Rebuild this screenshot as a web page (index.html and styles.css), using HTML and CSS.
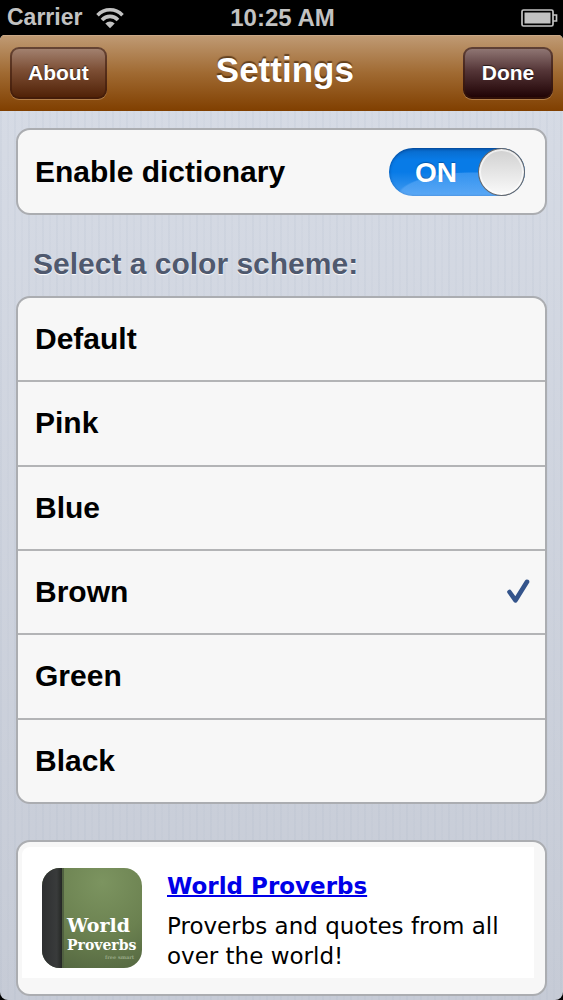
FILE: index.html
```html
<!DOCTYPE html>
<html lang="en">
<head>
<meta charset="utf-8">
<meta name="viewport" content="width=device-width, initial-scale=1">
<title>Settings</title>
<link rel="stylesheet" href="styles.css">
</head>
<body>
<div class="status">
  <div class="carrier">Carrier
    <svg width="28" height="22" viewBox="0 0 28 22" aria-label="Wi-Fi">
      <g fill="none" stroke="#c2c2c2" stroke-width="3.6">
        <path d="M1.5 8.2C8.5 1 19.500 1 26.500 8.200"/>
        <path d="M6 13C10.500 8.200 17.500 8.200 22 13"/>
      </g>
      <path d="M9.300 16.400C12 13.700 16 13.700 18.700 16.400L14 21.300Z" fill="#c2c2c2"/>
    </svg>
  </div>
  <div class="time">10:25 AM</div>
  <svg class="battery" width="37" height="18" viewBox="0 0 37 18" aria-label="Battery">
    <rect x="1" y="1" width="31" height="16" rx="1.500" fill="none" stroke="#c2c2c2" stroke-width="1.700"/>
    <rect x="3.500" y="3.500" width="26" height="11" fill="#c2c2c2"/>
    <path d="M32 6h3.500v6H32" fill="none" stroke="#c2c2c2" stroke-width="1.700"/>
  </svg>
</div>
<div class="screen">
  <header class="nav">
    <button class="nav-btn about" type="button">About</button>
    <h1 class="title">Settings</h1>
    <button class="nav-btn done" type="button">Done</button>
  </header>
  <main class="content">
    <div class="card dictionary">
      <label for="dictionary">Enable dictionary</label>
      <span class="switch">
        <input class="switch-input" type="checkbox" role="switch" id="dictionary" checked>
        <span class="switch-text" aria-hidden="true">ON</span>
      </span>
    </div>
    <h2 class="heading" id="scheme">Select a color scheme:</h2>
    <div class="card schemes" role="radiogroup" aria-labelledby="scheme">
      <label class="row">Default<input class="tick" type="radio" name="scheme"></label>
      <label class="row">Pink<input class="tick" type="radio" name="scheme"></label>
      <label class="row">Blue<input class="tick" type="radio" name="scheme"></label>
      <label class="row">Brown
        <svg class="check" width="24" height="26" viewBox="0 0 24 26" aria-hidden="true"><path d="M3.500 13L9.500 21.300L21 2.800" fill="none" stroke="#34548b" stroke-width="4.600" stroke-linecap="round" stroke-linejoin="round"/></svg>
        <input class="tick" type="radio" name="scheme" checked></label>
      <label class="row">Green<input class="tick" type="radio" name="scheme"></label>
      <label class="row">Black<input class="tick" type="radio" name="scheme"></label>
    </div>
    <div class="card promo">
      <div class="promo-inner">
        <svg class="app-icon" width="102" height="102" viewBox="0 0 102 102" role="img" aria-label="World Proverbs">
          <defs>
            <clipPath id="round"><rect x="1" y="1" width="100" height="100" rx="18"/></clipPath>
            <radialGradient id="cover" cx=".6" cy=".15" r=".95"><stop offset="0" stop-color="#7c9460"/><stop offset=".55" stop-color="#6b8150"/><stop offset="1" stop-color="#536640"/></radialGradient>
            <linearGradient id="spine"><stop offset="0" stop-color="#2d2e30"/><stop offset=".75" stop-color="#393b3b"/><stop offset="1" stop-color="#242724"/></linearGradient>
          </defs>
          <g clip-path="url(#round)">
            <rect width="102" height="102" fill="url(#cover)"/>
            <rect width="21" height="102" fill="url(#spine)"/>
            <rect x="21" width="2" height="102" fill="#506040"/>
            <text class="icon-world" x="26" y="65">World</text>
            <text class="icon-proverbs" x="26" y="83">Proverbs</text>
            <text class="icon-small" x="64" y="92">free smart</text>
          </g>
        </svg>
        <div class="promo-text">
          <a class="promo-link" href="#">World Proverbs</a>
          <p class="promo-copy">Proverbs and quotes from all over the world!</p>
        </div>
      </div>
    </div>
  </main>
</div>
</body>
</html>
```

FILE: styles.css
```css
* { box-sizing: border-box; }
body {
  margin: 0;
  min-height: 100vh;
  display: flex;
  flex-direction: column;
  background: #000;
  color: #000;
  font-family: "Liberation Sans", Arial, sans-serif;
  font-weight: bold;
}
.status {
  display: grid;
  grid-template-columns: 1fr auto 1fr;
  align-items: center;
  height: 35px;
  padding: 0 5px 0 7px;
  color: #c2c2c2;
  font-size: 24px;
}
.carrier { display: flex; align-items: center; gap: 14px; font-size: 23px; }
.battery { justify-self: end; }
.screen {
  flex: 1;
  display: flex;
  flex-direction: column;
  overflow: hidden;
  border-radius: 5px 5px 8px 8px;
  background: linear-gradient(#d7dce6, #c6cbd6);
}
.nav {
  display: grid;
  grid-template-columns: auto 1fr auto;
  align-items: center;
  height: 76px;
  padding: 0 10px;
  background: linear-gradient(#c09b75, #a06a32 50%, #803f00);
  box-shadow: inset 0 1px #c9a887;
}
.title {
  margin: 0 0 6px;
  color: #fff;
  font-size: 35px;
  line-height: 40px;
  text-align: center;
  text-shadow: 0 -2px 1px rgba(50, 25, 0, .6);
}
.nav-btn {
  height: 52px;
  padding: 0 16px;
  border: 2px solid rgba(60, 25, 10, .6);
  border-radius: 9px;
  background-origin: border-box;
  color: #fff;
  font: inherit;
  font-size: 21px;
  text-shadow: 0 -1px 1px rgba(0, 0, 0, .6);
  box-shadow: 0 1px rgba(255, 220, 180, .35);
}
.about { background-image: linear-gradient(#a58574, #7c4e34 45%, #4e1f04); }
.done { min-width: 90px; background-image: linear-gradient(#947b78, #553638 45%, #1d0002); }
.content {
  flex: 1;
  padding: 17px 16px 4px;
  background: repeating-linear-gradient(90deg, rgba(150, 165, 185, .09) 0 2px, transparent 2px 7px, rgba(150, 165, 185, .05) 7px 9px, transparent 9px 14px);
}
.card {
  border: 2px solid #abadb1;
  border-radius: 14px;
  background: #f7f7f7;
  font-size: 30px;
}
.dictionary {
  display: flex;
  align-items: center;
  justify-content: space-between;
  height: 87px;
  padding: 0 20px 0 17px;
}
.switch { position: relative; display: flex; }
.switch-input {
  appearance: none;
  width: 136px;
  height: 48px;
  margin: 0;
  border-radius: 24px;
  background:
    radial-gradient(ellipse 76px 24px at 84px 48px, rgba(130, 190, 255, .35) 96%, transparent),
    linear-gradient(#0969c8, #087be7 25%, #087be7 50%, #459cf0);
  box-shadow: inset 0 1px 3px rgba(0, 50, 120, .7);
}
.switch-input::after {
  content: "";
  display: block;
  box-sizing: border-box;
  width: 47px;
  height: 48px;
  margin-left: auto;
  border: 1px solid #66686c;
  border-radius: 50%;
  background: linear-gradient(#d0d0d0, #fafafa);
  box-shadow: inset 0 0 0 2px rgba(255, 255, 255, .6);
}
.switch-text {
  position: absolute;
  inset: 0 46px 0 4px;
  color: #fff;
  font-size: 28px;
  line-height: 50px;
  text-align: center;
  text-shadow: 0 -1px 1px rgba(0, 50, 110, .5);
  pointer-events: none;
}
.heading {
  margin: 32px 17px 15px;
  color: #4f596e;
  font-size: 30px;
  line-height: 34px;
  text-shadow: 0 1px 1px #fff;
}
.schemes {
  display: grid;
  grid-auto-rows: 1fr;
  gap: 2px;
  min-height: 508px;
  overflow: hidden;
  background: #b3b4b6;
}
.row {
  display: flex;
  align-items: center;
  justify-content: space-between;
  padding: 0 15px 0 17px;
  background: #f7f7f7;
}
.tick { position: absolute; opacity: 0; pointer-events: none; }
.promo { margin-top: 36px; padding: 5px 11px 16px 4px; }
.promo-inner {
  display: flex;
  gap: 24px;
  padding: 20px 20px 4px;
  background: #fff;
  border-radius: 8px 0 0 0;
}
.app-icon { flex: none; margin-left: -1px; margin-bottom: 5px; }
.icon-world, .icon-proverbs, .icon-small { fill: #fff; font-family: "DejaVu Serif", serif; font-weight: bold; }
.icon-world { font-size: 19px; }
.icon-proverbs { font-size: 14px; }
.icon-small { font-size: 5px; fill: #98a986; }
.promo-text { padding-top: 4px; font-family: "DejaVu Sans", Verdana, sans-serif; font-size: 23px; line-height: 30px; }
.promo-link { color: #0000e8; text-decoration-thickness: 2px; }
.promo-copy { margin: 10px 0 0; font-weight: normal; }
```
